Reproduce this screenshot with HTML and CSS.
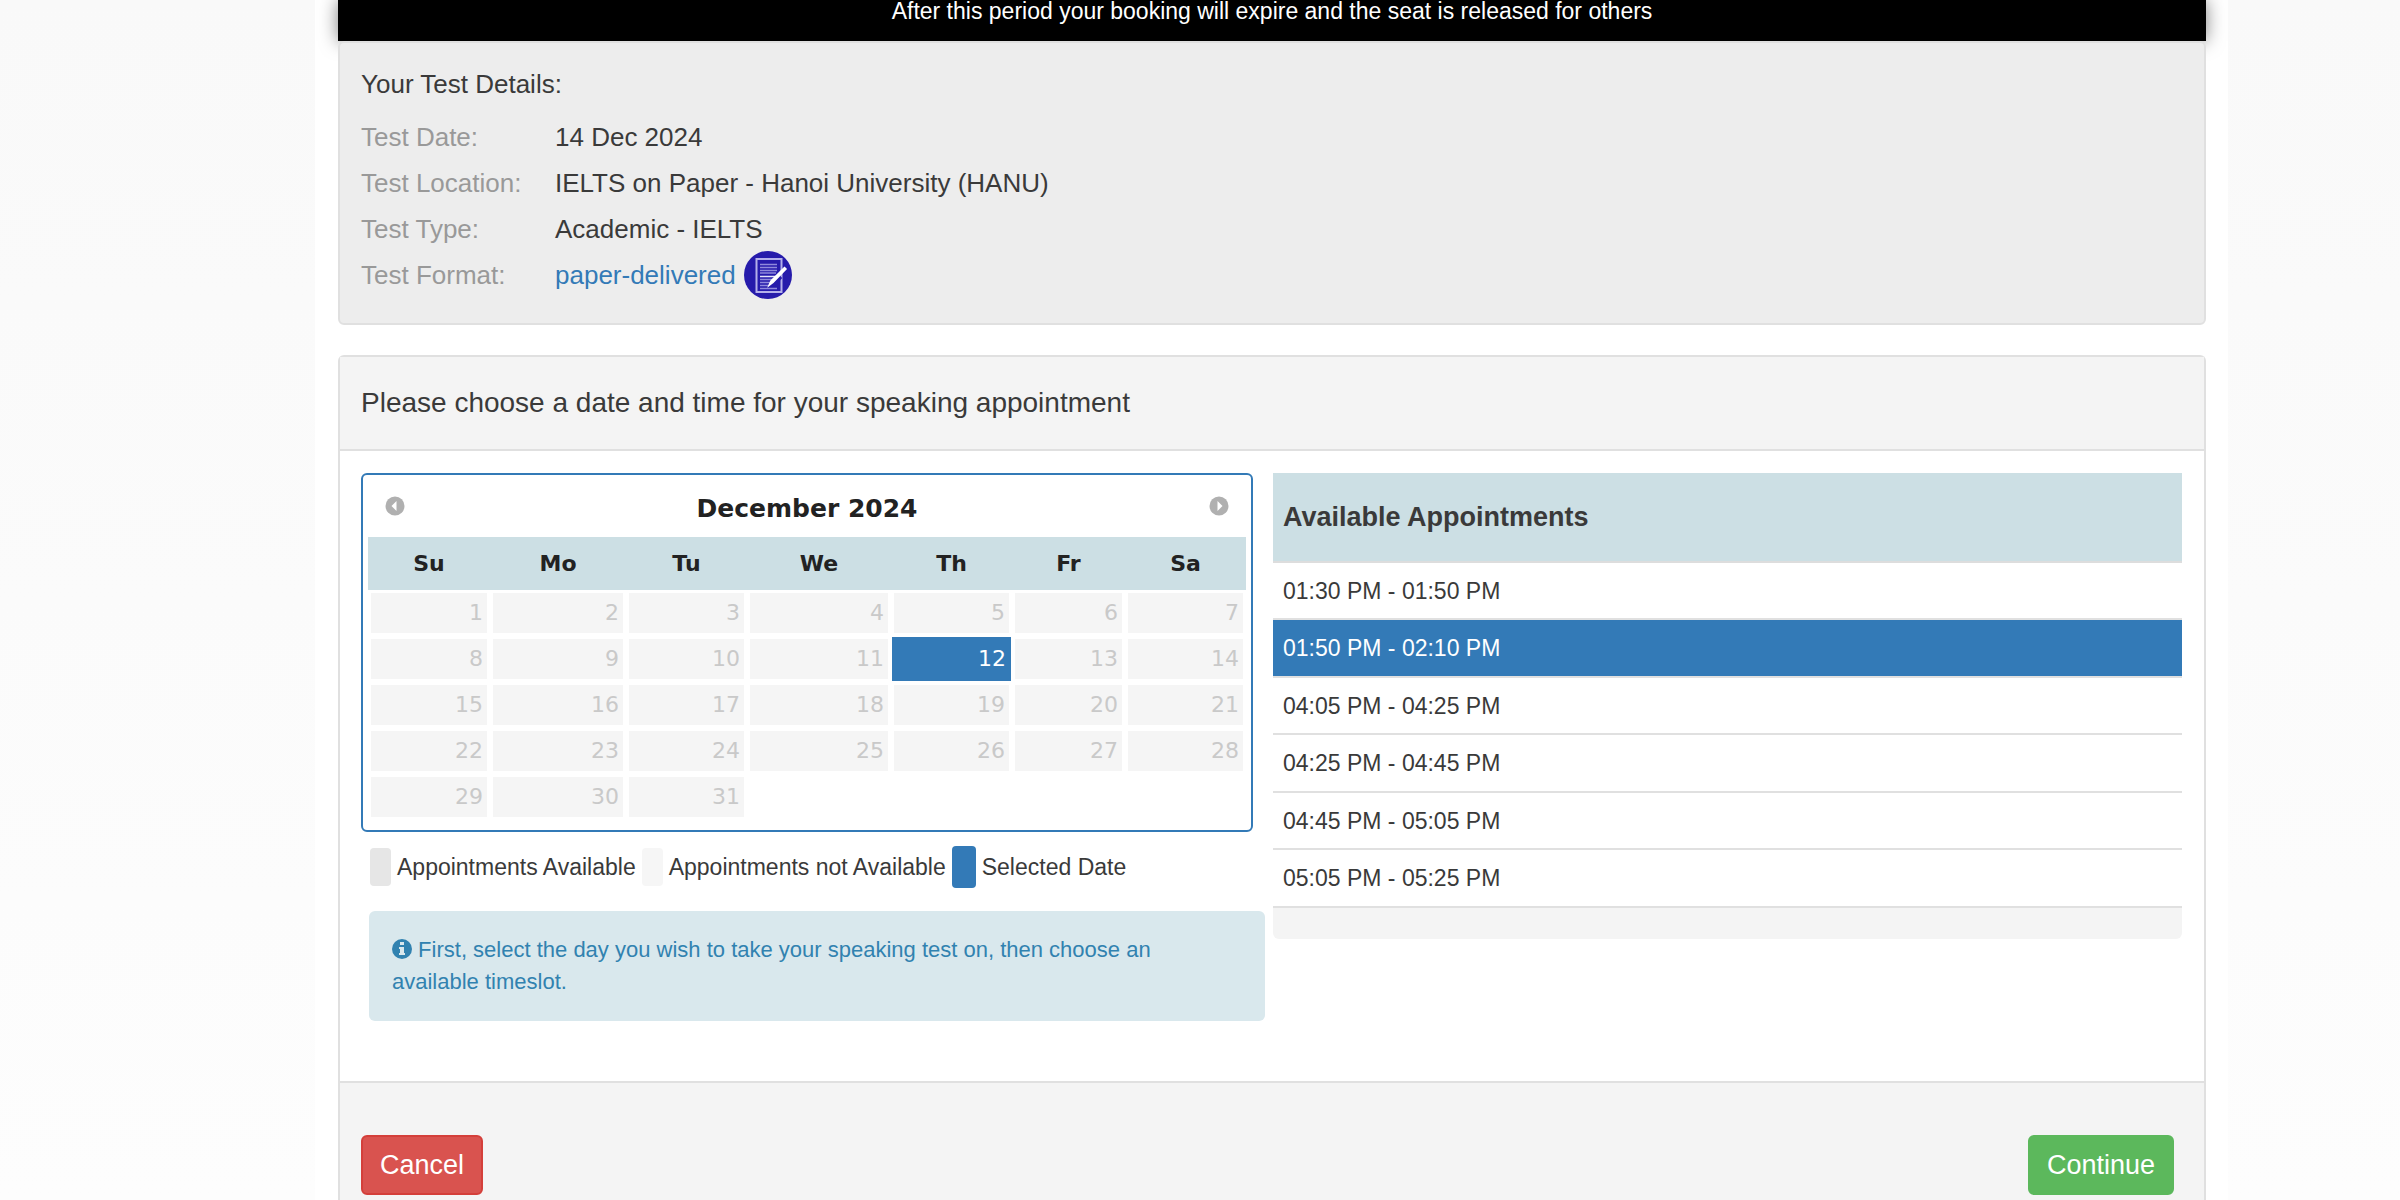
FILE: index.html
```html
<!DOCTYPE html>
<html lang="en">
<head>
<meta charset="utf-8">
<title>Speaking appointment</title>
<link rel="stylesheet" href="styles.css">
</head>
<body>
<main class="container">
  <div class="notice">After this period your booking will expire and the seat is released for others</div>

  <section class="details">
    <h2 class="details-title">Your Test Details:</h2>
    <dl class="details-list">
      <dt>Test Date:</dt><dd>14 Dec 2024</dd>
      <dt>Test Location:</dt><dd>IELTS on Paper - Hanoi University (HANU)</dd>
      <dt>Test Type:</dt><dd>Academic - IELTS</dd>
      <dt>Test Format:</dt>
      <dd class="format"><a href="#format">paper-delivered</a>
        <svg class="format-icon" viewBox="0 0 48 48" aria-hidden="true">
          <circle cx="24" cy="24" r="24" fill="#261bab"/>
          <rect x="12.500" y="8" width="25" height="33" fill="none" stroke="#b4b0ea" stroke-width="2"/>
          <path d="M16 13.500h17M16 16.500h17M16 19.500h17M16 22h16M16 28.500h13M16 31.500h11M16 34.500h9M16 37.500h17" stroke="#8f89dc" stroke-width="1.500"/>
          <path d="M16 25.500h16" stroke="#e6e4fa" stroke-width="1.500"/>
          <path d="M36 25l-8 9" stroke="#261bab" stroke-width="6"/>
          <path d="M40.500 16.500l1.500 1.500-13 13.500-4 3 2-4.500z" fill="#fff" stroke="#fff" stroke-width="1.500"/>
        </svg>
      </dd>
    </dl>
  </section>

  <section class="panel">
    <header class="panel-head"><h2>Please choose a date and time for your speaking appointment</h2></header>
    <div class="panel-body">
      <div class="date-column">
        <div class="calendar">
          <div class="calendar-head">
            <button class="month-nav" type="button" aria-label="Previous month">
              <svg viewBox="0 0 20 20"><circle cx="10" cy="10" r="9.500" fill="#b0b0b0"/><path d="M11.500 5v10l-5-5z" fill="#fff"/></svg>
            </button>
            <span class="month">December 2024</span>
            <button class="month-nav" type="button" aria-label="Next month">
              <svg viewBox="0 0 20 20"><circle cx="10" cy="10" r="9.500" fill="#b0b0b0"/><path d="M8.500 5v10l5-5z" fill="#fff"/></svg>
            </button>
          </div>
          <table class="days">
            <colgroup><col class="c-su"><col class="c-mo"><col class="c-tu"><col class="c-we"><col class="c-th"><col class="c-fr"><col class="c-sa"></colgroup>
            <thead><tr><th>Su</th><th>Mo</th><th>Tu</th><th>We</th><th>Th</th><th>Fr</th><th>Sa</th></tr></thead>
            <tbody>
              <tr><td><span>1</span></td><td><span>2</span></td><td><span>3</span></td><td><span>4</span></td><td><span>5</span></td><td><span>6</span></td><td><span>7</span></td></tr>
              <tr><td><span>8</span></td><td><span>9</span></td><td><span>10</span></td><td><span>11</span></td><td class="chosen"><button type="button">12</button></td><td><span>13</span></td><td><span>14</span></td></tr>
              <tr><td><span>15</span></td><td><span>16</span></td><td><span>17</span></td><td><span>18</span></td><td><span>19</span></td><td><span>20</span></td><td><span>21</span></td></tr>
              <tr><td><span>22</span></td><td><span>23</span></td><td><span>24</span></td><td><span>25</span></td><td><span>26</span></td><td><span>27</span></td><td><span>28</span></td></tr>
              <tr><td><span>29</span></td><td><span>30</span></td><td><span>31</span></td><td></td><td></td><td></td><td></td></tr>
            </tbody>
          </table>
        </div>
        <ul class="legend">
          <li><i class="swatch free"></i>Appointments Available</li>
          <li><i class="swatch full"></i>Appointments not Available</li>
          <li><i class="swatch selected"></i>Selected Date</li>
        </ul>
        <p class="hint"><svg class="info-icon" viewBox="0 0 20 20" aria-hidden="true"><circle cx="10" cy="10" r="10" fill="#3182b0"/><path d="M8 3h4v3H8zM7 8h5v6h1v2H7v-2h1v-4H7z" fill="#d9e8ed"/></svg> First, select the day you wish to take your speaking test on, then choose an available timeslot.</p>
      </div>
      <div class="time-column">
        <table class="slots">
          <thead><tr><th>Available Appointments</th></tr></thead>
          <tbody>
            <tr><td><button type="button">01:30 PM - 01:50 PM</button></td></tr>
            <tr class="active"><td><button type="button">01:50 PM - 02:10 PM</button></td></tr>
            <tr><td><button type="button">04:05 PM - 04:25 PM</button></td></tr>
            <tr><td><button type="button">04:25 PM - 04:45 PM</button></td></tr>
            <tr><td><button type="button">04:45 PM - 05:05 PM</button></td></tr>
            <tr><td><button type="button">05:05 PM - 05:25 PM</button></td></tr>
          </tbody>
        </table>
        <div class="slots-foot"></div>
      </div>
    </div>
    <footer class="panel-foot">
      <button class="btn cancel" type="button">Cancel</button>
      <button class="btn continue" type="button">Continue</button>
    </footer>
  </section>
</main>
</body>
</html>
```
FILE: styles.css
```css
* { box-sizing: border-box; }

body {
  margin: 0;
  background: linear-gradient(#f9f9f9, #fdfdfd);
  color: #3a3a3a;
  font-family: "Liberation Sans", Arial, sans-serif;
  font-size: 22px;
  line-height: 32px;
}

button { font: inherit; color: inherit; margin: 0; cursor: pointer; }
h2, p, dl, dd, ul { margin: 0; padding: 0; }

.container {
  margin: 0 172px 0 315px;
  padding: 0 22px 0 23px;
  background: #fff;
}

.notice {
  height: 41px;
  line-height: 23px;
  background: #000;
  color: #fff;
  font-size: 23px;
  text-align: center;
  box-shadow: 0 0 18px rgba(0, 0, 0, .5);
}

/* Booked test summary */
.details {
  position: relative;
  padding: 25px 22px 25px 21px;
  border: 2px solid #e0e0e0;
  border-radius: 6px;
  background: #ededed;
}
.details-title {
  margin-bottom: 14px;
  font-size: 26px;
  font-weight: 400;
}
.details-list {
  display: grid;
  grid-template-columns: 194px 1fr;
  grid-auto-rows: 46px;
  align-items: center;
  font-size: 26px;
}
.details-list dt { color: #999; }
.format { display: flex; align-items: center; gap: 8px; }
.format a { color: #337ab7; text-decoration: none; }
.format-icon { width: 48px; height: 48px; }

/* Appointment panel */
.panel {
  margin-top: 30px;
  border: 2px solid #e0e0e0;
  border-bottom: 0;
  border-radius: 6px 6px 0 0;
}
.panel-head {
  padding: 30px 22px 30px 21px;
  border-bottom: 2px solid #e0e0e0;
  background: #f4f4f4;
}
.panel-head h2 { font-size: 28px; font-weight: 400; }
.panel-body {
  display: grid;
  grid-template-columns: 1fr 1fr;
  padding: 22px 22px 60px 21px;
}

.calendar {
  margin-right: 20px;
  padding: 5px 5px 10px;
  border: 2px solid #337ab7;
  border-radius: 6px;
  font-family: "DejaVu Sans", Verdana, sans-serif;
}
.calendar-head {
  display: flex;
  align-items: center;
  justify-content: space-between;
  height: 57px;
  padding: 0 17px;
}
.month { color: #222; font-size: 25px; font-weight: 700; }
.month-nav {
  display: flex;
  padding: 0 0 6px;
  border: 0;
  background: none;
}
.month-nav svg { width: 20px; height: 20px; }

.days { width: 100%; border-collapse: collapse; table-layout: fixed; }
.c-su { width: 122px; }
.c-mo { width: 136px; }
.c-tu { width: 121px; }
.c-we { width: 144px; }
.c-th { width: 121px; }
.c-fr { width: 113px; }
.c-sa { width: 121px; }
.days th {
  height: 53px;
  padding: 0;
  background: #ccdfe4;
  color: #222;
  font-weight: 700;
}
.days td { height: 46px; padding: 3px; text-align: right; }
.days span {
  display: block;
  padding: 4px 4px;
  background: #f5f5f5;
  color: #c9c9c9;
}
.days .chosen { padding: 1px; }
.chosen button {
  display: block;
  width: 100%;
  padding: 6px 5px;
  border: 0;
  background: #337ab7;
  color: #fff;
  text-align: right;
}

.legend {
  display: flex;
  gap: 6px;
  margin: 14px 0 0 9px;
  list-style: none;
  font-size: 23px;
}
.legend li { display: flex; align-items: center; gap: 6px; height: 42px; white-space: nowrap; }
.swatch { width: 21px; height: 38px; border-radius: 4px; }
.free { background: #e6e6e6; }
.full { background: #f6f6f6; }
.selected { width: 24px; height: 42px; background: #337ab7; }

.hint {
  margin: 23px 8px 0;
  padding: 23px;
  border-radius: 6px;
  background: #d9e8ed;
  color: #3182b0;
}
.info-icon { width: 20px; height: 20px; vertical-align: -2px; }

.slots { width: 100%; border-collapse: collapse; font-size: 23px; }
.slots th {
  height: 89px;
  padding: 0 10px;
  border-bottom: 2px solid #ddd;
  background: #ccdfe4;
  font-size: 27px;
  text-align: left;
}
.slots td { padding: 0; border-bottom: 2px solid #e0e0e0; }
.slots button {
  display: block;
  width: 100%;
  height: 56px;
  padding: 0 10px;
  border: 0;
  background: none;
  text-align: left;
}
.slots tr:nth-child(odd) button { height: 55px; }
.active { background: #337ab7; color: #fff; }
.slots-foot { height: 31px; border-radius: 0 0 6px 6px; background: #f4f4f4; }

.panel-foot {
  display: flex;
  align-items: flex-start;
  justify-content: space-between;
  padding: 52px 30px 5px 21px;
  border-top: 2px solid #e0e0e0;
  background: #f4f4f4;
}
.btn {
  height: 60px;
  padding: 0 17px;
  border: 2px solid;
  border-radius: 6px;
  color: #fff;
  font-size: 27px;
}
.cancel { background: #d9534f; border-color: #d43f3a; }
.continue { background: #5cb85c; border-color: #5cb85c; }
```
